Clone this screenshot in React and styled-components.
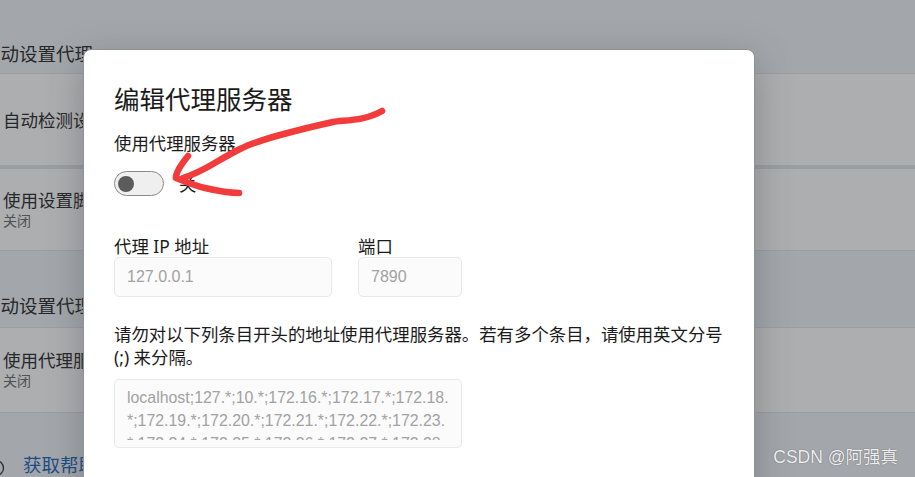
import React from "react";
import styled, { createGlobalStyle } from "styled-components";

const GlobalStyle = createGlobalStyle`
  html, body {
    margin: 0;
    padding: 0;
    width: 915px;
    height: 477px;
    overflow: hidden;
    font-family: "Noto Sans", "Noto Sans CJK SC", sans-serif;
  }
`;

const Page = styled.div`
  position: relative;
  width: 915px;
  height: 477px;
  overflow: hidden;
  background: #a3a7ab;
  color: #262729;
  display: flex;
  flex-direction: column;
`;

const SectionHeader = styled.div`
  height: ${(p) => p.$height}px;
  box-sizing: border-box;
  padding-top: ${(p) => p.$top}px;
  font-size: 18.5px;
  line-height: 28px;
  text-indent: -18px;
  white-space: nowrap;
`;

const Card = styled.div`
  height: ${(p) => p.$height}px;
  box-sizing: border-box;
  background: #adaeb0;
  border-top: ${(p) => p.$topBorder || 1}px solid #999ea2;
  border-bottom: 1px solid #999ea2;
  padding-left: 3px;
  display: flex;
  flex-direction: column;
  justify-content: center;
  white-space: nowrap;
`;

const CardTitle = styled.div`
  font-size: 17.5px;
  line-height: 22px;
`;

const CardSub = styled.div`
  font-size: 14px;
  line-height: 20px;
  color: #4f5153;
`;

const Footer = styled.div`
  flex: 1;
  display: flex;
  align-items: flex-end;
  gap: 18px;
  margin-left: -13px;
`;

const HelpLink = styled.a`
  font-size: 18.5px;
  line-height: 24px;
  color: #1e4c86;
  text-decoration: none;
  white-space: nowrap;
`;

const Dialog = styled.div`
  position: absolute;
  left: 83px;
  top: 49px;
  width: 672px;
  height: 470px;
  box-sizing: border-box;
  padding: 32px 30px 0;
  background: #ffffff;
  border-radius: 8px;
  border: 1px solid #8e9296;
  box-shadow: 0 10px 36px rgba(60, 64, 70, 0.35);
  color: #1b1b1b;
  display: flex;
  flex-direction: column;
`;

const Title = styled.h2`
  margin: 0;
  font-weight: 400;
  font-size: 25.5px;
  line-height: 34px;
  white-space: nowrap;
`;

const Label = styled.div`
  font-size: 17.4px;
  line-height: ${(p) => p.$lh || 24}px;
  margin-top: ${(p) => p.$mt || 0}px;
  white-space: nowrap;
`;

const ToggleRow = styled.div`
  margin-top: 16px;
  height: 25px;
  display: flex;
  align-items: center;
  gap: 15px;
  font-size: 17.4px;
`;

const Track = styled.div`
  width: 50px;
  height: 25px;
  box-sizing: border-box;
  border: 1px solid #8a8a8a;
  border-radius: 13px;
  background: #efefef;
  display: flex;
  align-items: center;
  padding-left: 3px;
`;

const Knob = styled.div`
  width: 16px;
  height: 16px;
  border-radius: 50%;
  background: #5c5c5c;
`;

const FieldRow = styled.div`
  margin-top: 39px;
  display: flex;
  gap: 26px;
`;

const Field = styled.div`
  display: flex;
  flex-direction: column;
`;

const Input = styled.div`
  width: ${(p) => p.$width}px;
  height: 40px;
  box-sizing: border-box;
  border: 1px solid #e9e9e9;
  border-radius: 5px;
  background: #fbfbfb;
  padding-left: 12px;
  display: flex;
  align-items: center;
  font-family: "Liberation Sans", sans-serif;
  font-size: 16px;
  color: #a2a2a2;
`;

const Note = styled.p`
  margin: 26px 0 0;
  font-size: 17.4px;
  line-height: 23px;
`;

const TextBox = styled.div`
  margin-top: 10px;
  width: 348px;
  height: 69px;
  box-sizing: border-box;
  border: 1px solid #e9e9e9;
  border-radius: 5px;
  background: #fbfbfb;
  padding: 6px 12px 0;
  color: #a2a2a2;
`;

const TextScroll = styled.div`
  height: 54px;
  overflow: hidden;
  font-family: "Liberation Sans", sans-serif;
  font-size: 15.9px;
  line-height: 23px;
`;

const TextLine = styled.div`
  white-space: nowrap;
`;

const Annotation = styled.svg`
  position: absolute;
  left: 0;
  top: 0;
  pointer-events: none;
`;

const Watermark = styled.div`
  position: absolute;
  right: 17px;
  bottom: 10px;
  font-size: 17.5px;
  line-height: 20px;
  font-family: "Liberation Sans", "Noto Sans CJK SC", sans-serif;
  color: #eeeeee;
  text-shadow: 0 0 1px #6d7074, 0 0 1px #6d7074;
`;

const hostLines = [
  "localhost;127.*;10.*;172.16.*;172.17.*;172.18.",
  "*;172.19.*;172.20.*;172.21.*;172.22.*;172.23.",
  "*;172.24.*;172.25.*;172.26.*;172.27.*;172.28.",
];

export default function App() {
  return (
    <>
      <GlobalStyle />
      <Page>
        <SectionHeader $height={73} $top={40}>自动设置代理</SectionHeader>
        <Card $height={93}>
          <CardTitle>自动检测设置</CardTitle>
        </Card>
        <Card $height={85} $topBorder={3}>
          <CardTitle>使用设置脚本</CardTitle>
          <CardSub>关闭</CardSub>
        </Card>
        <SectionHeader $height={76} $top={41}>手动设置代理</SectionHeader>
        <Card $height={86}>
          <CardTitle>使用代理服务器</CardTitle>
          <CardSub>关闭</CardSub>
        </Card>
        <Footer>
          <svg width="18" height="18" viewBox="0 0 18 18">
            <circle cx="9" cy="9" r="7.5" fill="none" stroke="#2b2d30" strokeWidth="1.3" />
            <path d="M6.8 7.2a2.2 2.2 0 1 1 3 2c-.6.3-.8.7-.8 1.3" fill="none" stroke="#2b2d30" strokeWidth="1.3" />
            <circle cx="9" cy="12.8" r=".8" fill="#2b2d30" />
          </svg>
          <HelpLink href="#">获取帮助</HelpLink>
        </Footer>

        <Dialog>
          <Title>编辑代理服务器</Title>
          <Label $mt={15}>使用代理服务器</Label>
          <ToggleRow>
            <Track role="switch" aria-checked="false">
              <Knob />
            </Track>
            <span>关</span>
          </ToggleRow>
          <FieldRow>
            <Field>
              <Label $lh={22}>代理 IP 地址</Label>
              <Input $width={218}>127.0.0.1</Input>
            </Field>
            <Field>
              <Label $lh={22}>端口</Label>
              <Input $width={104}>7890</Input>
            </Field>
          </FieldRow>
          <Note>
            请勿对以下列条目开头的地址使用代理服务器。若有多个条目，请使用英文分号 (;) 来分隔。
          </Note>
          <TextBox>
            <TextScroll>
              {hostLines.map((l) => (
                <TextLine key={l}>{l}</TextLine>
              ))}
            </TextScroll>
          </TextBox>
        </Dialog>

        <Annotation width="915" height="477" viewBox="0 0 915 477">
          <g fill="none" stroke="#f23b3b" strokeWidth="6.5" strokeLinecap="round" strokeLinejoin="round">
            <path d="M382 111 C 365 121, 345 120, 333 122 C 310 127, 295 131, 280 135 C 262 140, 250 144, 240 149 C 228 155, 220 160, 213 164 C 203 170, 195 174, 183 178" />
            <path d="M188 156 C 183 162, 178 168, 176 176" />
            <path d="M176 178 C 186 182, 196 186, 205 188 C 218 191, 228 193, 239 193" />
          </g>
        </Annotation>

        <Watermark>CSDN @阿强真</Watermark>
      </Page>
    </>
  );
}
